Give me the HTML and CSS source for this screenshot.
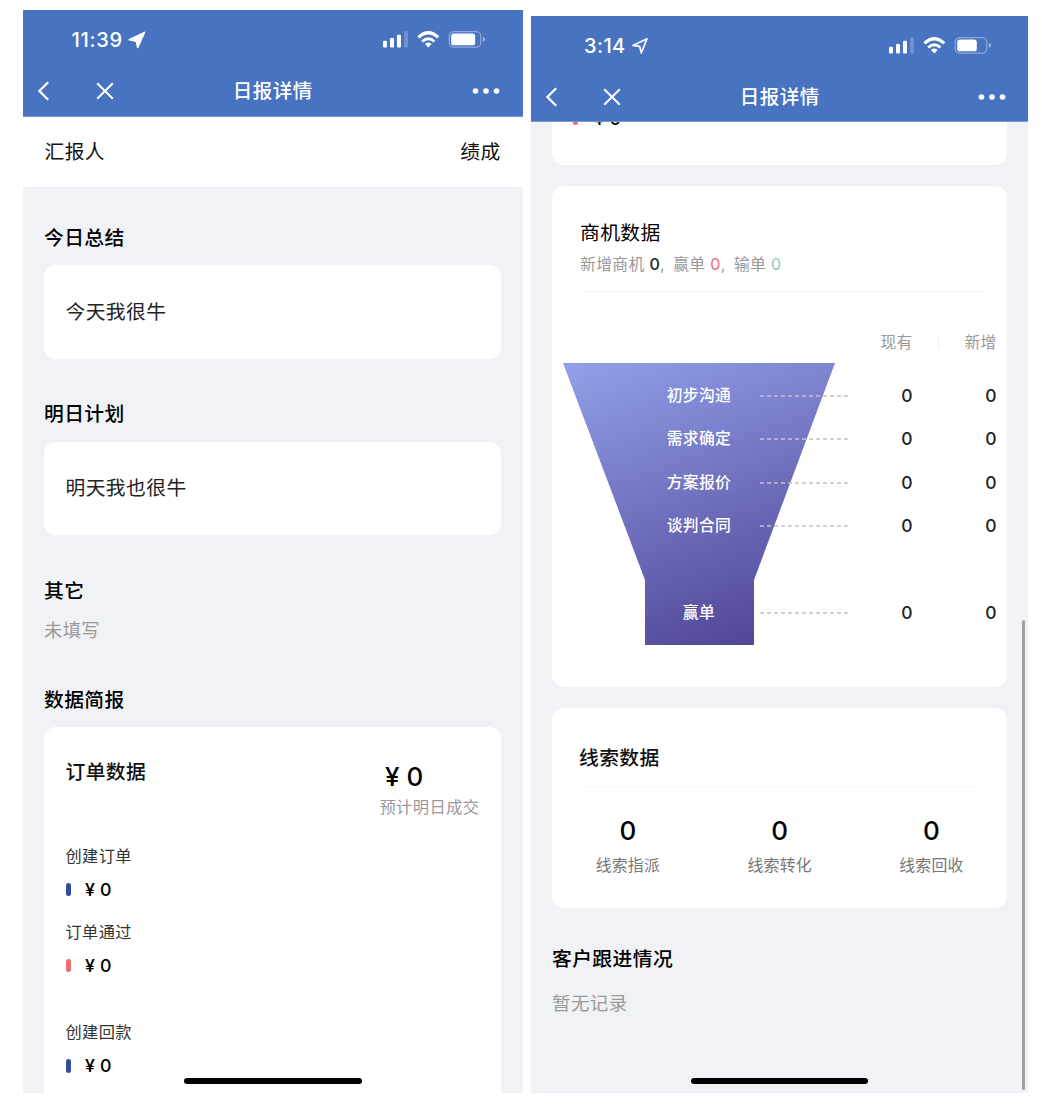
FILE: index.html
```html
<!DOCTYPE html>
<html lang="zh-CN">
<head>
<meta charset="utf-8">
<title>日报详情</title>
<link rel="stylesheet" href="styles.css">
</head>
<body>
<main class="stage">
  <section class="phone phone-left">
    <header class="header">
      <div class="status">
        <span class="time">11:39</span>
        <svg class="loc" width="18" height="18" viewBox="0 0 18 18"><path d="M1.300 8.800 16.500 1.400 9.700 16.300 8.300 10.100Z" fill="#fff" stroke="#fff" stroke-width="1.600" stroke-linejoin="round"/></svg>
        <svg class="signals" width="104" height="20" viewBox="0 0 104 20">
          <g fill="#fff"><rect x="1" y="10.8" width="4" height="6.6" rx="1"/><rect x="8" y="8" width="4" height="9.4" rx="1"/><rect x="15" y="4.8" width="4" height="12.6" rx="1"/><rect x="22" y="1.2" width="4" height="16.2" rx="1" opacity=".22"/></g>
          <g fill="none" stroke="#fff" stroke-width="3.3"><path d="M36.4 7.4Q46.3-1.8 56.2 7.4"/><path d="M40.2 11.5Q46.3 6 52.4 11.5" stroke-width="3"/></g>
          <path d="M43 13.9Q46.3 11.3 49.6 13.9L46.3 17.4Z" fill="#fff"/>
          <rect x="67.2" y="1.6" width="31.6" height="15.6" rx="4.6" fill="none" stroke="#fff" stroke-opacity=".4" stroke-width="1.2"/>
          <rect x="69.2" y="3.6" width="24" height="11.7" rx="2.6" fill="#fff"/>
          <path d="M101 6.8Q103 7.5 103 9.3T101 12Z" fill="#fff" opacity=".5"/>
        </svg>
      </div>
      <nav class="nav">
        <svg class="back" width="12" height="20" viewBox="0 0 12 20"><path d="M10.2 1.2 1.4 10l8.8 8.8" fill="none" stroke="#fff" stroke-width="2.2"/></svg>
        <svg class="close" width="18" height="18" viewBox="0 0 18 18"><path d="M1.2 1.2 16.8 16.8M16.8 1.2 1.2 16.8" fill="none" stroke="#fff" stroke-width="2"/></svg>
        <h1 class="nav-title">日报详情</h1>
        <svg class="more" width="28" height="8" viewBox="0 0 28 8"><g fill="#fff"><circle cx="3.5" cy="4" r="2.8"/><circle cx="14" cy="4" r="2.8"/><circle cx="24.5" cy="4" r="2.8"/></g></svg>
      </nav>
    </header>
    <div class="reporter"><span>汇报人</span><span>绩成</span></div>
    <div class="body">
      <h2 class="heading">今日总结</h2>
      <div class="card note">今天我很牛</div>
      <h2 class="heading">明日计划</h2>
      <div class="card note">明天我也很牛</div>
      <h2 class="heading heading-empty">其它</h2>
      <p class="empty">未填写</p>
      <h2 class="heading heading-brief">数据简报</h2>
      <div class="card orders">
        <div class="orders-top">
          <h3 class="card-title">订单数据</h3>
          <div class="forecast"><strong class="big yen">¥ 0</strong><span class="caption">预计明日成交</span></div>
        </div>
        <div class="metric"><span class="metric-name">创建订单</span><span class="amount"><i class="bar blue"></i>¥ 0</span></div>
        <div class="metric metric-last"><span class="metric-name">订单通过</span><span class="amount"><i class="bar red"></i>¥ 0</span></div>
        <div class="metric"><span class="metric-name">创建回款</span><span class="amount"><i class="bar blue"></i>¥ 0</span></div>
      </div>
    </div>
    <div class="home"></div>
  </section>

  <section class="phone phone-right">
    <header class="header">
      <div class="status">
        <span class="time">3:14</span>
        <svg class="loc" width="18" height="18" viewBox="0 0 18 18"><path d="M1.9 8.4 16 1.8 10.3 16 8.7 9.4Z" fill="none" stroke="#fff" stroke-width="1.7" stroke-linejoin="round"/></svg>
        <svg class="signals" width="104" height="20" viewBox="0 0 104 20">
          <g fill="#fff"><rect x="1" y="10.8" width="4" height="6.6" rx="1"/><rect x="8" y="8" width="4" height="9.4" rx="1"/><rect x="15" y="4.8" width="4" height="12.6" rx="1"/><rect x="22" y="1.2" width="4" height="16.2" rx="1" opacity=".22"/></g>
          <g fill="none" stroke="#fff" stroke-width="3.3"><path d="M36.4 7.4Q46.3-1.8 56.2 7.4"/><path d="M40.2 11.5Q46.3 6 52.4 11.5" stroke-width="3"/></g>
          <path d="M43 13.9Q46.3 11.3 49.6 13.9L46.3 17.4Z" fill="#fff"/>
          <rect x="67.2" y="1.6" width="31.6" height="15.6" rx="4.6" fill="none" stroke="#fff" stroke-opacity=".4" stroke-width="1.2"/>
          <rect x="69.2" y="3.6" width="19.6" height="11.7" rx="2.6" fill="#fff"/>
          <path d="M101 6.8Q103 7.5 103 9.3T101 12Z" fill="#fff" opacity=".5"/>
        </svg>
      </div>
      <nav class="nav">
        <svg class="back" width="12" height="20" viewBox="0 0 12 20"><path d="M10.2 1.2 1.4 10l8.8 8.8" fill="none" stroke="#fff" stroke-width="2.2"/></svg>
        <svg class="close" width="18" height="18" viewBox="0 0 18 18"><path d="M1.2 1.2 16.8 16.8M16.8 1.2 1.2 16.8" fill="none" stroke="#fff" stroke-width="2"/></svg>
        <h1 class="nav-title">日报详情</h1>
        <svg class="more" width="28" height="8" viewBox="0 0 28 8"><g fill="#fff"><circle cx="3.5" cy="4" r="2.8"/><circle cx="14" cy="4" r="2.8"/><circle cx="24.5" cy="4" r="2.8"/></g></svg>
      </nav>
    </header>
    <div class="body">
      <div class="card scrolled"><span class="amount"><i class="bar red"></i>¥ 0</span></div>
      <div class="card chances">
        <div class="chances-head">
          <h3 class="card-title regular">商机数据</h3>
          <p class="summary">新增商机 <b class="dark">0</b>,&ensp;赢单 <b class="rose">0</b>,&ensp;输单 <b class="mint">0</b></p>
        </div>
        <div class="columns"><span>现有</span><i class="split"></i><span>新增</span></div>
        <div class="funnel">
          <svg class="funnel-shape" width="272" height="282" viewBox="0 0 272 282">
            <defs><linearGradient id="depth" gradientUnits="userSpaceOnUse" x1="30" y1="-20" x2="145" y2="288"><stop offset="0" stop-color="#94a2eb"/><stop offset="1" stop-color="#53499a"/></linearGradient></defs>
            <path d="M0 0H272L191 217V282H82V217Z" fill="url(#depth)"/>
          </svg>
          <div class="stages">
            <div class="stage-row"><span class="stage-name">初步沟通</span><svg class="dash" width="88" height="2"><path d="M0 1H88"/></svg><b>0</b><b>0</b></div>
            <div class="stage-row"><span class="stage-name">需求确定</span><svg class="dash" width="88" height="2"><path d="M0 1H88"/></svg><b>0</b><b>0</b></div>
            <div class="stage-row"><span class="stage-name">方案报价</span><svg class="dash" width="88" height="2"><path d="M0 1H88"/></svg><b>0</b><b>0</b></div>
            <div class="stage-row"><span class="stage-name">谈判合同</span><svg class="dash" width="88" height="2"><path d="M0 1H88"/></svg><b>0</b><b>0</b></div>
            <div class="stage-row won"><span class="stage-name">赢单</span><svg class="dash" width="88" height="2"><path d="M0 1H88"/></svg><b>0</b><b>0</b></div>
          </div>
        </div>
      </div>
      <div class="card leads">
        <h3 class="card-title leads-title">线索数据</h3>
        <div class="lead-grid">
          <div class="lead"><strong class="big">0</strong><span>线索指派</span></div>
          <div class="lead"><strong class="big">0</strong><span>线索转化</span></div>
          <div class="lead"><strong class="big">0</strong><span>线索回收</span></div>
        </div>
      </div>
      <h2 class="heading heading-follow">客户跟进情况</h2>
      <p class="empty empty-follow">暂无记录</p>
    </div>
    <div class="home"></div>
    <div class="scrollbar"></div>
  </section>
</main>
</body>
</html>
```
FILE: styles.css
```css
* { box-sizing: border-box; }
body { margin: 0; background: #fff; color: #111; font-family: Inter, "Noto Sans CJK SC", sans-serif; }
h1, h2, h3, p { margin: 0; }
svg { display: block; flex: none; }

.stage { display: flex; align-items: flex-start; width: 1042px; height: 1112px; padding-left: 23px; overflow: hidden; }
.phone { position: relative; display: flex; flex-direction: column; overflow: hidden; background: #f1f2f6; }
.phone-left { width: 499.6px; height: 1083px; margin-top: 10px; }
.phone-right { width: 497.5px; height: 1077px; margin: 16px 0 0 8.4px; }

/* Status bar and navigation */
.header { flex: none; height: 106.5px; background: #4873c0; border-bottom: 1px solid #7897d3; color: #fff; }
.phone-right .header { height: 106px; }
.status { display: flex; align-items: center; height: 60px; padding: 0 37px 0 48.5px; }
.time { font-size: 20px; font-weight: 500; line-height: 24px; letter-spacing: .7px; }
.loc { margin: 0 0 1px 5px; }
.signals { margin-left: auto; }
.phone-right .status { padding: 0 36px 0 53px; }
.phone-right .time { letter-spacing: .4px; }
.nav { position: relative; display: flex; align-items: center; height: 42px; padding: 0 23px 0 15px; }
.phone-right .nav { padding-right: 22px; }
.close { margin-left: 45.5px; }
.nav-title { position: absolute; left: 0; right: 0; text-align: center; font-size: 19.5px; font-weight: 500; line-height: 28px; letter-spacing: .5px; }
.more { margin-left: auto; }

/* Report sections */
.reporter { flex: none; display: flex; justify-content: space-between; align-items: center; height: 70.5px; padding: 0 22px 2px 21.5px; background: #fff; font-size: 19.8px; letter-spacing: .4px; }
.body { flex: 1; min-height: 0; padding: 0 21px; overflow: hidden; }
.phone-left .body { padding-right: 21.6px; }
.heading { margin: 41.5px 0 13.5px; font-size: 19.8px; font-weight: 500; line-height: 28px; letter-spacing: .4px; color: #000; }
.phone-left .heading:first-child { margin-top: 36.5px; }
.card { background: #fff; border-radius: 12px; }
.note { display: flex; align-items: center; height: 93.5px; padding: 0 21.5px 3px; font-size: 19.8px; letter-spacing: .4px; color: #222; }
.heading-empty { margin: 42px 0 10.5px; }
.empty { font-size: 18.3px; line-height: 28px; letter-spacing: .4px; color: #999; }
.heading-brief { margin: 42px 0 13px; }

.card-title { font-size: 19.8px; font-weight: 500; line-height: 28px; letter-spacing: .4px; color: #111; }
.card-title.regular { font-weight: 400; color: #000; }
.orders { height: 420px; padding: 31px 21.5px 0; }
.orders-top { display: flex; justify-content: space-between; height: 86px; }
.forecast { display: flex; flex-direction: column; padding-top: 3px; }
.big { font-size: 26px; font-weight: 500; line-height: 32px; color: #000; }
.yen { padding-left: 5.5px; letter-spacing: .1px; }
.caption { font-size: 16.3px; line-height: 26px; margin-top: 1px; letter-spacing: .4px; color: #999; }
.metric { display: flex; flex-direction: column; height: 76px; }
.metric-last { height: 100.3px; }
.metric-name { font-size: 16.2px; line-height: 24px; letter-spacing: .4px; color: #333; }
.amount { display: flex; align-items: center; gap: 14px; height: 24px; margin-top: 10px; font-size: 17.8px; font-weight: 500; line-height: 24px; letter-spacing: .2px; color: #000; }
.bar { width: 5.5px; height: 13.5px; border-radius: 2.5px; }
.blue { background: #344c9e; }
.red { background: #eb6c74; }

/* Opportunity funnel */
.phone-right .card { width: 455px; }
.scrolled { height: 43px; padding: 0 21px; overflow: hidden; }
.phone-right .scrolled { border-radius: 0 0 12px 12px; }
.scrolled .amount { margin-top: -15.5px; gap: 16px; }
.chances { height: 501px; margin-top: 21.4px; overflow: hidden; }
.chances-head { height: 106px; margin: 0 21px 0 28px; padding-top: 33px; border-bottom: 1px solid #f3f3fa; }
.summary { font-size: 15.8px; line-height: 24px; margin-top: 5px; letter-spacing: .35px; color: #999; white-space: nowrap; }
.summary b { font-weight: 400; font-size: 16px; }
.summary .dark { color: #222; font-weight: 500; }
.summary .rose { color: #f3686e; }
.summary .mint { color: #86cdc6; }
.columns { display: flex; justify-content: flex-end; align-items: center; gap: 25.5px; height: 24px; margin: 39px 10.5px 0 0; font-size: 15.8px; line-height: 24px; letter-spacing: .2px; color: #999; }
.split { width: 1px; height: 12px; background: #eee; }
.funnel { display: grid; margin: 8px 10.5px 0 11.2px; }
.funnel-shape, .stages { grid-area: 1 / 1; }
.stages { z-index: 1; padding-top: 11px; }
.stage-row { display: grid; grid-template-columns: 197px 88px 64.4px 83.9px; align-items: center; height: 43.3px; }
.stage-row.won { margin-top: 43.5px; }
.stage-name { padding-left: 74.5px; text-align: center; font-size: 15.8px; font-weight: 500; letter-spacing: .3px; color: #fff; line-height: 24px; }
.stage-row b { font-size: 17.5px; font-weight: 500; line-height: 24px; text-align: right; color: #222; }
.dash path { stroke: #c4c4c4; stroke-width: 1.3px; stroke-dasharray: 4 3; fill: none; }

/* Lead totals */
.leads { height: 200px; margin-top: 21px; padding: 35.5px 0 0 27px; }
.leads-title { width: 401px; height: 43px; border-bottom: 1px solid #f7f7f7; }
.lead-grid { display: grid; grid-template-columns: repeat(3, 151.8px); margin: 28px 0 0 -27px; }
.lead { display: flex; flex-direction: column; align-items: center; gap: 7px; color: #777; font-size: 15.9px; line-height: 24px; letter-spacing: .2px; }
.heading-follow { margin: 36.5px 0 16px; }
.empty-follow { font-size: 18.5px; }

.home { position: absolute; bottom: 9px; left: 160.5px; width: 178.5px; height: 6px; border-radius: 3px; background: #000; }
.phone-right .home { left: 160px; width: 177.5px; }
.scrollbar { position: absolute; right: 3.2px; bottom: 3px; width: 3.8px; height: 470px; border-radius: 2px; background: #a0a0a4; }
```
